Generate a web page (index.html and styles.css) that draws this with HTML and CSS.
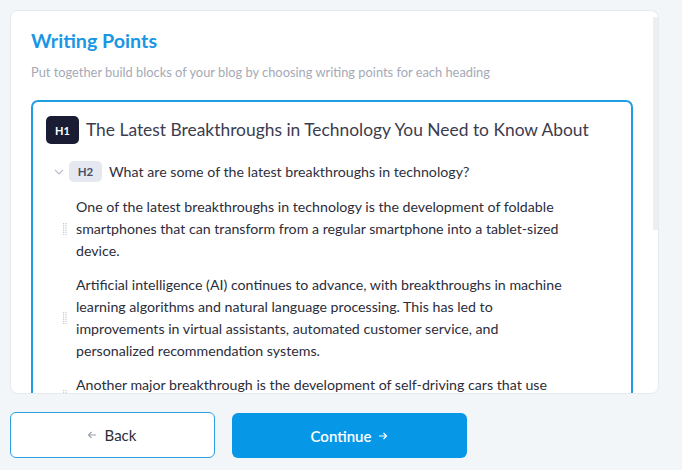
FILE: index.html
```html
<!DOCTYPE html>
<html>
<head>
<meta charset="utf-8">
<link rel="stylesheet" href="styles.css">
</head>
<body>
<div class="page">
  <section class="card">
    <div class="scroll-thumb"></div>
    <h1 class="title">Writing Points</h1>
    <p class="subtitle">Put together build blocks of your blog by choosing writing points for each heading</p>
    <div class="outline">
      <div class="h1-row">
        <span class="badge badge-h1">H1</span>
        <span class="h1-text">The Latest Breakthroughs in Technology You Need to Know About</span>
      </div>
      <div class="h2-row">
        <svg class="chev" width="10" height="6" viewBox="0 0 10 6"><path d="M1 1 L5 5 L9 1" fill="none" stroke="#b9bdc9" stroke-width="1.1"/></svg>
        <span class="badge badge-h2">H2</span>
        <span class="h2-text">What are some of the latest breakthroughs in technology?</span>
      </div>
      <div class="points">
        <div class="point">
          <svg class="grip" width="4" height="12" viewBox="0 0 4 12"><g fill="#c4c8d2"><rect x="0" y="0" width="1.2" height="1.2"/><rect x="2.4" y="0" width="1.2" height="1.2"/><rect x="0" y="2.2" width="1.2" height="1.2"/><rect x="2.4" y="2.2" width="1.2" height="1.2"/><rect x="0" y="4.4" width="1.2" height="1.2"/><rect x="2.4" y="4.4" width="1.2" height="1.2"/><rect x="0" y="6.6" width="1.2" height="1.2"/><rect x="2.4" y="6.6" width="1.2" height="1.2"/><rect x="0" y="8.8" width="1.2" height="1.2"/><rect x="2.4" y="8.8" width="1.2" height="1.2"/><rect x="0" y="11" width="1.2" height="1"/><rect x="2.4" y="11" width="1.2" height="1"/></g></svg>
          <p>One of the latest breakthroughs in technology is the development of foldable smartphones that can transform from a regular smartphone into a tablet-sized device.</p>
        </div>
        <div class="point">
          <svg class="grip" width="4" height="12" viewBox="0 0 4 12"><g fill="#c4c8d2"><rect x="0" y="0" width="1.2" height="1.2"/><rect x="2.4" y="0" width="1.2" height="1.2"/><rect x="0" y="2.2" width="1.2" height="1.2"/><rect x="2.4" y="2.2" width="1.2" height="1.2"/><rect x="0" y="4.4" width="1.2" height="1.2"/><rect x="2.4" y="4.4" width="1.2" height="1.2"/><rect x="0" y="6.6" width="1.2" height="1.2"/><rect x="2.4" y="6.6" width="1.2" height="1.2"/><rect x="0" y="8.8" width="1.2" height="1.2"/><rect x="2.4" y="8.8" width="1.2" height="1.2"/><rect x="0" y="11" width="1.2" height="1"/><rect x="2.4" y="11" width="1.2" height="1"/></g></svg>
          <p>Artificial intelligence (AI) continues to advance, with breakthroughs in machine learning algorithms and natural language processing. This has led to improvements in virtual assistants, automated customer service, and personalized recommendation systems.</p>
        </div>
        <div class="point">
          <svg class="grip" width="4" height="12" viewBox="0 0 4 12"><g fill="#c4c8d2"><rect x="0" y="0" width="1.2" height="1.2"/><rect x="2.4" y="0" width="1.2" height="1.2"/><rect x="0" y="2.2" width="1.2" height="1.2"/><rect x="2.4" y="2.2" width="1.2" height="1.2"/><rect x="0" y="4.4" width="1.2" height="1.2"/><rect x="2.4" y="4.4" width="1.2" height="1.2"/><rect x="0" y="6.6" width="1.2" height="1.2"/><rect x="2.4" y="6.6" width="1.2" height="1.2"/><rect x="0" y="8.8" width="1.2" height="1.2"/><rect x="2.4" y="8.8" width="1.2" height="1.2"/><rect x="0" y="11" width="1.2" height="1"/><rect x="2.4" y="11" width="1.2" height="1"/></g></svg>
          <p>Another major breakthrough is the development of self-driving cars that use advanced sensors and machine learning to navigate roads safely.</p>
        </div>
      </div>
    </div>
  </section>
  <div class="actions">
    <button class="btn btn-back">
      <svg width="10" height="8" viewBox="0 0 10 8"><path d="M9 4 H1.5 M4.5 1 L1.5 4 L4.5 7" fill="none" stroke="#9aa0b0" stroke-width="1.1"/></svg>
      <span>Back</span>
    </button>
    <button class="btn btn-continue">
      <span>Continue</span>
      <svg width="10" height="8" viewBox="0 0 10 8"><path d="M1 4 H8.5 M5.5 1 L8.5 4 L5.5 7" fill="none" stroke="#ffffff" stroke-width="1.2"/></svg>
    </button>
  </div>
</div>
</body>
</html>
```

FILE: styles.css
```css
* { box-sizing: border-box; }
html, body {
  margin: 0;
  padding: 0;
  background: #f3f6f9;
  font-family: "Lato", "Liberation Sans", sans-serif;
}
.page {
  padding: 10px;
  display: flex;
  flex-direction: column;
  gap: 18px;
}
.card {
  position: relative;
  width: 649px;
  height: 384px;
  background: #ffffff;
  border: 1px solid #e6e9ee;
  border-radius: 8px;
  padding: 15px 25px 0 20px;
  overflow: hidden;
}
.scroll-thumb {
  position: absolute;
  right: 0;
  top: 6px;
  width: 5px;
  height: 213px;
  background: #eceef2;
}
.title {
  margin: 0;
  font-size: 19.7px;
  font-weight: 700;
  line-height: 30px;
  color: #1a96e4;
}
.subtitle {
  margin: 7px 0 0;
  font-size: 12.85px;
  line-height: 18px;
  color: #a5a9b6;
}
.outline {
  margin-top: 19px;
  border: 2px solid #1f9ee3;
  border-radius: 7px;
  padding: 14px 16px 20px 13px;
}
.h1-row {
  display: flex;
  align-items: center;
  gap: 7px;
}
.badge {
  display: inline-flex;
  align-items: center;
  justify-content: center;
  width: 33px;
  flex: none;
  font-weight: 700;
  border-radius: 5px;
}
.badge-h1 {
  height: 28px;
  background: #1a1c33;
  color: #ffffff;
  font-size: 11px;
}
.h1-text {
  font-size: 17.4px;
  color: #3b3c4e;
  line-height: 28px;
  white-space: nowrap;
}
.h2-row {
  display: flex;
  align-items: center;
  margin-top: 17px;
  padding-left: 8px;
}
.chev { margin-right: 5px; margin-top: 1px; }
.badge-h2 {
  height: 21px;
  background: #e5e8f1;
  color: #4b4f63;
  font-size: 11.5px;
}
.h2-text {
  margin-left: 7px;
  font-size: 14.2px;
  color: #2f3040;
  line-height: 21px;
}
.points {
  margin-top: 14px;
  display: flex;
  flex-direction: column;
  gap: 12px;
}
.point {
  display: flex;
  align-items: center;
  padding-left: 17px;
}
.grip { flex: none; margin-right: 9px; }
.point p {
  margin: 0;
  width: 495px;
  font-size: 14.2px;
  line-height: 22px;
  color: #2c2d3b;
}
.actions {
  display: flex;
  gap: 17px;
}
.btn {
  height: 46px;
  border-radius: 6px;
  font-family: "Lato", "Liberation Sans", sans-serif;
  font-size: 15px;
  display: inline-flex;
  align-items: center;
  justify-content: center;
  gap: 7px;
  cursor: pointer;
}
.btn-back {
  width: 205px;
  background: #ffffff;
  border: 1px solid #2a9fe2;
  color: #2c2d3b;
  gap: 8px;
  padding-left: 4px;
}
.btn-continue {
  width: 235px;
  margin-top: 1px;
  height: 45px;
  background: #0797e7;
  border: none;
  color: #ffffff;
  font-weight: 600;
}
```
